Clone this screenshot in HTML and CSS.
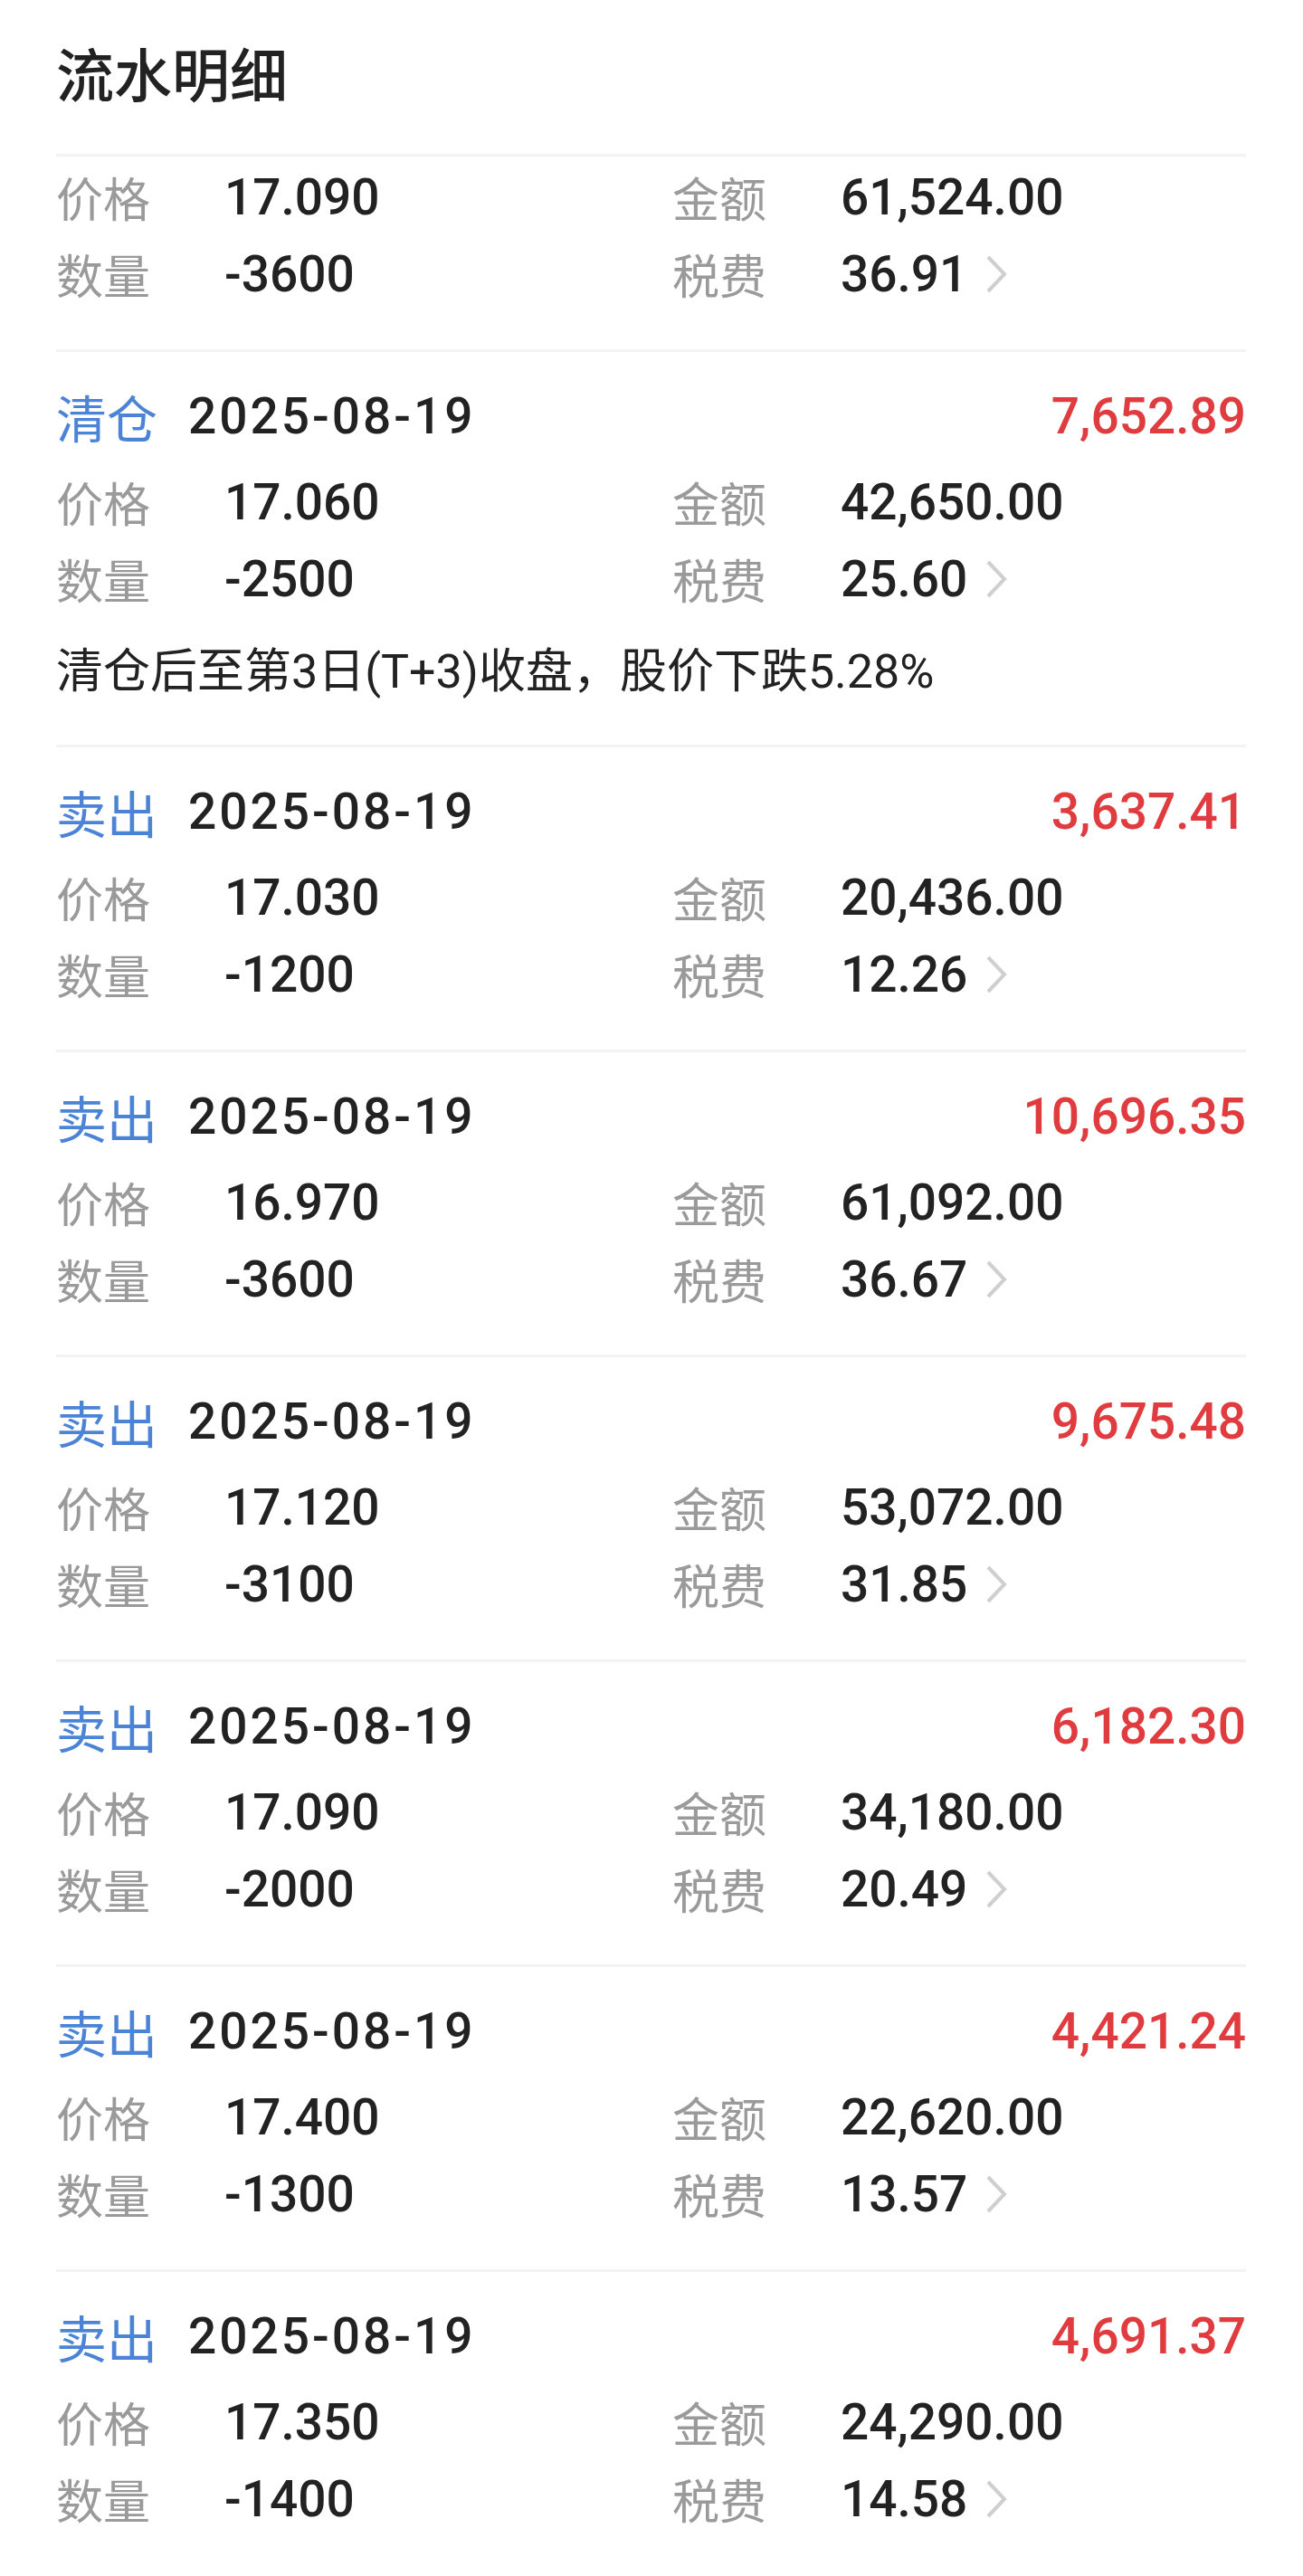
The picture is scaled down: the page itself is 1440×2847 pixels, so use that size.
FILE: index.html
```html
<!DOCTYPE html>
<html lang="zh-CN">

<head>
    <meta charset="UTF-8" />
    <meta name="viewport" content="width=device-width, initial-scale=1.0" />
    <title>流水明细</title>
    <link rel="stylesheet" href="styles.css">
</head>

<body>
    <div class="page">
        <!-- Header -->
        <h1 class="title">流水明细</h1>

        <!-- Trade list -->
        <div class="list">
            <div class="item item-cut">
                <div class="row">
                    <div class="cell"><span class="label">价格</span><span class="val">17.090</span></div>
                    <div class="cell"><span class="label">金额</span><span class="val">61,524.00</span></div>
                </div>
                <div class="row">
                    <div class="cell"><span class="label">数量</span><span class="val">-3600</span></div>
                    <div class="cell"><span class="label">税费</span><span class="val">36.91</span><svg class="chevron" viewBox="0 0 24 42"><polyline points="3,2 21,21 3,40" /></svg></div>
                </div>
            </div>

            <div class="item">
                <div class="item-head">
                    <span class="type">清仓</span>
                    <span class="date">2025-08-19</span>
                    <span class="profit">7,652.89</span>
                </div>
                <div class="row">
                    <div class="cell"><span class="label">价格</span><span class="val">17.060</span></div>
                    <div class="cell"><span class="label">金额</span><span class="val">42,650.00</span></div>
                </div>
                <div class="row">
                    <div class="cell"><span class="label">数量</span><span class="val">-2500</span></div>
                    <div class="cell"><span class="label">税费</span><span class="val">25.60</span><svg class="chevron" viewBox="0 0 24 42"><polyline points="3,2 21,21 3,40" /></svg></div>
                </div>
                <p class="note">清仓后至第3日(T+3)收盘，股价下跌5.28%</p>
            </div>

            <div class="item">
                <div class="item-head">
                    <span class="type">卖出</span>
                    <span class="date">2025-08-19</span>
                    <span class="profit">3,637.41</span>
                </div>
                <div class="row">
                    <div class="cell"><span class="label">价格</span><span class="val">17.030</span></div>
                    <div class="cell"><span class="label">金额</span><span class="val">20,436.00</span></div>
                </div>
                <div class="row">
                    <div class="cell"><span class="label">数量</span><span class="val">-1200</span></div>
                    <div class="cell"><span class="label">税费</span><span class="val">12.26</span><svg class="chevron" viewBox="0 0 24 42"><polyline points="3,2 21,21 3,40" /></svg></div>
                </div>
            </div>

            <div class="item">
                <div class="item-head">
                    <span class="type">卖出</span>
                    <span class="date">2025-08-19</span>
                    <span class="profit">10,696.35</span>
                </div>
                <div class="row">
                    <div class="cell"><span class="label">价格</span><span class="val">16.970</span></div>
                    <div class="cell"><span class="label">金额</span><span class="val">61,092.00</span></div>
                </div>
                <div class="row">
                    <div class="cell"><span class="label">数量</span><span class="val">-3600</span></div>
                    <div class="cell"><span class="label">税费</span><span class="val">36.67</span><svg class="chevron" viewBox="0 0 24 42"><polyline points="3,2 21,21 3,40" /></svg></div>
                </div>
            </div>

            <div class="item">
                <div class="item-head">
                    <span class="type">卖出</span>
                    <span class="date">2025-08-19</span>
                    <span class="profit">9,675.48</span>
                </div>
                <div class="row">
                    <div class="cell"><span class="label">价格</span><span class="val">17.120</span></div>
                    <div class="cell"><span class="label">金额</span><span class="val">53,072.00</span></div>
                </div>
                <div class="row">
                    <div class="cell"><span class="label">数量</span><span class="val">-3100</span></div>
                    <div class="cell"><span class="label">税费</span><span class="val">31.85</span><svg class="chevron" viewBox="0 0 24 42"><polyline points="3,2 21,21 3,40" /></svg></div>
                </div>
            </div>

            <div class="item">
                <div class="item-head">
                    <span class="type">卖出</span>
                    <span class="date">2025-08-19</span>
                    <span class="profit">6,182.30</span>
                </div>
                <div class="row">
                    <div class="cell"><span class="label">价格</span><span class="val">17.090</span></div>
                    <div class="cell"><span class="label">金额</span><span class="val">34,180.00</span></div>
                </div>
                <div class="row">
                    <div class="cell"><span class="label">数量</span><span class="val">-2000</span></div>
                    <div class="cell"><span class="label">税费</span><span class="val">20.49</span><svg class="chevron" viewBox="0 0 24 42"><polyline points="3,2 21,21 3,40" /></svg></div>
                </div>
            </div>

            <div class="item">
                <div class="item-head">
                    <span class="type">卖出</span>
                    <span class="date">2025-08-19</span>
                    <span class="profit">4,421.24</span>
                </div>
                <div class="row">
                    <div class="cell"><span class="label">价格</span><span class="val">17.400</span></div>
                    <div class="cell"><span class="label">金额</span><span class="val">22,620.00</span></div>
                </div>
                <div class="row">
                    <div class="cell"><span class="label">数量</span><span class="val">-1300</span></div>
                    <div class="cell"><span class="label">税费</span><span class="val">13.57</span><svg class="chevron" viewBox="0 0 24 42"><polyline points="3,2 21,21 3,40" /></svg></div>
                </div>
            </div>

            <div class="item">
                <div class="item-head">
                    <span class="type">卖出</span>
                    <span class="date">2025-08-19</span>
                    <span class="profit">4,691.37</span>
                </div>
                <div class="row">
                    <div class="cell"><span class="label">价格</span><span class="val">17.350</span></div>
                    <div class="cell"><span class="label">金额</span><span class="val">24,290.00</span></div>
                </div>
                <div class="row">
                    <div class="cell"><span class="label">数量</span><span class="val">-1400</span></div>
                    <div class="cell"><span class="label">税费</span><span class="val">14.58</span><svg class="chevron" viewBox="0 0 24 42"><polyline points="3,2 21,21 3,40" /></svg></div>
                </div>
            </div>
        </div>
    </div>
</body>

</html>
```

FILE: styles.css
```css
* {
    box-sizing: border-box;
}

body {
    margin: 0;
    background: #fff;
    color: #222;
    font-family: Roboto, "Noto Sans CJK SC", sans-serif;
}

.page {
    padding: 0 63px 0 62px;
}

.title {
    margin: 0;
    height: 170px;
    padding-top: 34px;
    font-size: 64px;
    line-height: 90px;
    font-weight: 500;
    font-family: "Noto Sans CJK SC", sans-serif;
}

/* each trade */
.item {
    border-top: 3px solid #f3f3f3;
    padding: 28px 0 41px;
}

.item-cut {
    padding-top: 2px;
}

.item:last-child {
    padding-bottom: 30px;
}

.item-head {
    display: flex;
    align-items: center;
    height: 85px;
    margin-bottom: 10px;
}

.type {
    width: 146px;
    font-size: 56px;
    color: #4b84d7;
    font-family: "Noto Sans CJK SC", sans-serif;
}

.date {
    font-size: 55px;
    font-weight: 500;
    letter-spacing: 3px;
}

.profit {
    margin-left: auto;
    font-size: 55px;
    font-weight: 500;
    color: #e03c3f;
}

.row {
    display: grid;
    grid-template-columns: 681px 1fr;
    height: 85px;
}

.cell {
    display: flex;
    align-items: center;
}

.label {
    width: 186px;
    font-size: 52px;
    color: #9a9a9a;
    font-family: "Noto Sans CJK SC", sans-serif;
}

.val {
    font-size: 55px;
    font-weight: 500;
}

.chevron {
    width: 24px;
    height: 42px;
    margin-left: 20px;
    fill: none;
    stroke: #cfcfcf;
    stroke-width: 4;
}

.note {
    margin: 22px 0 0;
    font-size: 52px;
    line-height: 78px;
    color: #222;
}
```
